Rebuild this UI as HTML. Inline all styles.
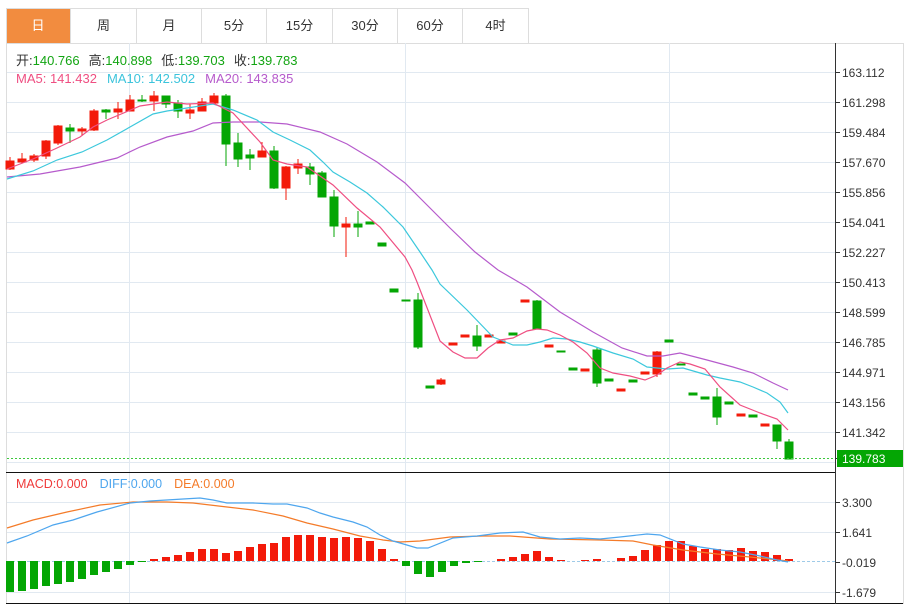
<!DOCTYPE html>
<html><head><meta charset="utf-8"><style>
html,body{margin:0;padding:0;background:#fff;width:914px;height:606px;overflow:hidden;font-family:"Liberation Sans","Noto Sans CJK SC",sans-serif;}
.tabs{position:absolute;left:6px;top:8px;height:35px;display:flex;border-top:1px solid #ddd;}
.tab{width:64.3px;height:34px;line-height:34px;text-align:center;font-size:13px;color:#333;border-right:1px solid #ddd;box-sizing:border-box;}
.tab.on{background:#f28c3f;color:#fff;}
</style></head><body>
<div class="tabs">
<div class="tab on" style="width:65px">日</div><div class="tab" style="width:66px">周</div><div class="tab" style="width:65px">月</div><div class="tab" style="width:65px">5分</div><div class="tab" style="width:66px">15分</div><div class="tab" style="width:65px">30分</div><div class="tab" style="width:65px">60分</div><div class="tab" style="width:66px">4时</div>
</div>
<svg width="914" height="606" style="position:absolute;left:0;top:0" xmlns="http://www.w3.org/2000/svg" font-family="Liberation Sans, Noto Sans CJK SC, sans-serif">
<g stroke="#e1e9f1" stroke-width="1">
<line x1="6" y1="43.5" x2="903" y2="43.5" stroke="#ddd"/>
<line x1="6.5" y1="8" x2="6.5" y2="604" stroke="#ddd"/>
<line x1="903.5" y1="43" x2="903.5" y2="604" stroke="#ddd"/>
<line x1="7" y1="72.5" x2="835" y2="72.5"/><line x1="7" y1="102.5" x2="835" y2="102.5"/><line x1="7" y1="132.5" x2="835" y2="132.5"/><line x1="7" y1="162.5" x2="835" y2="162.5"/><line x1="7" y1="192.5" x2="835" y2="192.5"/><line x1="7" y1="222.5" x2="835" y2="222.5"/><line x1="7" y1="252.5" x2="835" y2="252.5"/><line x1="7" y1="282.5" x2="835" y2="282.5"/><line x1="7" y1="312.5" x2="835" y2="312.5"/><line x1="7" y1="342.5" x2="835" y2="342.5"/><line x1="7" y1="372.5" x2="835" y2="372.5"/><line x1="7" y1="402.5" x2="835" y2="402.5"/><line x1="7" y1="432.5" x2="835" y2="432.5"/><line x1="7" y1="462.5" x2="835" y2="462.5"/>
<line x1="7" y1="502.5" x2="835" y2="502.5"/><line x1="7" y1="532.5" x2="835" y2="532.5"/><line x1="7" y1="592.5" x2="835" y2="592.5"/>
<line x1="129.5" y1="43" x2="129.5" y2="604"/><line x1="405.5" y1="43" x2="405.5" y2="604"/><line x1="669.5" y1="43" x2="669.5" y2="604"/>
</g>
<line x1="7" y1="561.5" x2="835" y2="561.5" stroke="#9fcbe8" stroke-dasharray="3,2"/>
<!-- legend -->
<text y="65" font-size="13"><tspan x="16" fill="#333">开:</tspan><tspan fill="#13a513">140.766</tspan><tspan dx="9" fill="#333">高:</tspan><tspan fill="#13a513">140.898</tspan><tspan dx="9" fill="#333">低:</tspan><tspan fill="#13a513">139.703</tspan><tspan dx="9" fill="#333">收:</tspan><tspan fill="#13a513">139.783</tspan></text>
<text y="83" font-size="13"><tspan x="16" fill="#ef4f82">MA5: 141.432</tspan><tspan dx="10" fill="#3cc4dc">MA10: 142.502</tspan><tspan dx="10" fill="#b65bcc">MA20: 143.835</tspan></text>
<!-- candles -->
<g stroke-width="1" shape-rendering="crispEdges">
<g fill="#f31a0a" stroke="#f31a0a">
<line x1="10" y1="157" x2="10" y2="170"/><rect x="6" y="161" width="8" height="8"/>
<line x1="22" y1="153" x2="22" y2="163"/><rect x="18" y="159" width="8" height="3"/>
<line x1="34" y1="154" x2="34" y2="162"/><rect x="30" y="156" width="8" height="4"/>
<line x1="46" y1="140" x2="46" y2="159"/><rect x="42" y="141" width="8" height="15"/>
<line x1="58" y1="125" x2="58" y2="145"/><rect x="54" y="126" width="8" height="17"/>
<line x1="82" y1="127" x2="82" y2="136"/><rect x="78" y="129" width="8" height="2"/>
<line x1="94" y1="109" x2="94" y2="131"/><rect x="90" y="111" width="8" height="19"/>
<line x1="118" y1="102" x2="118" y2="119"/><rect x="114" y="109" width="8" height="3"/>
<line x1="130" y1="95" x2="130" y2="111"/><rect x="126" y="100" width="8" height="11"/>
<line x1="154" y1="91" x2="154" y2="111"/><rect x="150" y="96" width="8" height="5"/>
<line x1="190" y1="104" x2="190" y2="119"/><rect x="186" y="110" width="8" height="3"/>
<line x1="202" y1="98" x2="202" y2="111"/><rect x="198" y="102" width="8" height="9"/>
<line x1="214" y1="93" x2="214" y2="103"/><rect x="210" y="96" width="8" height="7"/>
<line x1="262" y1="142" x2="262" y2="157"/><rect x="258" y="151" width="8" height="6"/>
<line x1="286" y1="166" x2="286" y2="200"/><rect x="282" y="167" width="8" height="21"/>
<line x1="298" y1="159" x2="298" y2="174"/><rect x="294" y="164" width="8" height="4"/>
<line x1="346" y1="217" x2="346" y2="257"/><rect x="342" y="224" width="8" height="3"/>
<line x1="441" y1="378" x2="441" y2="385"/><rect x="437" y="380" width="8" height="4"/>
<rect x="449" y="343" width="8" height="2"/>
<rect x="461" y="335" width="8" height="2"/>
<rect x="485" y="335" width="8" height="2"/>
<rect x="497" y="341" width="8" height="2"/>
<rect x="521" y="300" width="8" height="2"/>
<rect x="545" y="345" width="8" height="2"/>
<rect x="581" y="369" width="8" height="2"/>
<rect x="617" y="389" width="8" height="2"/>
<rect x="641" y="372" width="8" height="2"/>
<line x1="657" y1="351" x2="657" y2="377"/><rect x="653" y="352" width="8" height="22"/>
<rect x="737" y="414" width="8" height="2"/>
<rect x="761" y="424" width="8" height="2"/>
</g>
<g fill="#04a604" stroke="#04a604">
<line x1="70" y1="124" x2="70" y2="143"/><rect x="66" y="128" width="8" height="3"/>
<line x1="106" y1="109" x2="106" y2="119"/><rect x="102" y="110" width="8" height="2"/>
<line x1="142" y1="95" x2="142" y2="102"/><rect x="138" y="100" width="8" height="1"/>
<line x1="166" y1="96" x2="166" y2="108"/><rect x="162" y="96" width="8" height="8"/>
<line x1="178" y1="100" x2="178" y2="118"/><rect x="174" y="103" width="8" height="8"/>
<line x1="226" y1="94" x2="226" y2="166"/><rect x="222" y="96" width="8" height="48"/>
<line x1="238" y1="133" x2="238" y2="167"/><rect x="234" y="143" width="8" height="16"/>
<line x1="250" y1="149" x2="250" y2="170"/><rect x="246" y="155" width="8" height="3"/>
<line x1="274" y1="146" x2="274" y2="189"/><rect x="270" y="151" width="8" height="37"/>
<line x1="310" y1="163" x2="310" y2="185"/><rect x="306" y="167" width="8" height="7"/>
<line x1="322" y1="171" x2="322" y2="197"/><rect x="318" y="173" width="8" height="24"/>
<line x1="334" y1="190" x2="334" y2="237"/><rect x="330" y="197" width="8" height="29"/>
<line x1="358" y1="211" x2="358" y2="237"/><rect x="354" y="224" width="8" height="3"/>
<rect x="366" y="222" width="8" height="2"/>
<rect x="378" y="243" width="8" height="3"/>
<rect x="390" y="289" width="8" height="3"/>
<rect x="402" y="300" width="8" height="1"/>
<line x1="418" y1="293" x2="418" y2="349"/><rect x="414" y="300" width="8" height="47"/>
<rect x="426" y="386" width="8" height="2"/>
<line x1="477" y1="325" x2="477" y2="351"/><rect x="473" y="336" width="8" height="10"/>
<rect x="509" y="333" width="8" height="2"/>
<line x1="537" y1="300" x2="537" y2="329"/><rect x="533" y="301" width="8" height="28"/>
<rect x="557" y="351" width="8" height="1"/>
<rect x="569" y="368" width="8" height="2"/>
<line x1="597" y1="347" x2="597" y2="387"/><rect x="593" y="350" width="8" height="33"/>
<rect x="605" y="379" width="8" height="2"/>
<rect x="629" y="380" width="8" height="2"/>
<rect x="665" y="340" width="8" height="2"/>
<rect x="677" y="364" width="8" height="1"/>
<rect x="689" y="393" width="8" height="2"/>
<rect x="701" y="397" width="8" height="2"/>
<line x1="717" y1="388" x2="717" y2="425"/><rect x="713" y="397" width="8" height="20"/>
<rect x="725" y="402" width="8" height="2"/>
<rect x="749" y="415" width="8" height="2"/>
<line x1="777" y1="425" x2="777" y2="449"/><rect x="773" y="425" width="8" height="16"/>
<line x1="789" y1="439" x2="789" y2="459"/><rect x="785" y="442" width="8" height="17"/>
</g>
</g>
<!-- MAs -->
<g fill="none" stroke-width="1.2">
<polyline stroke="#b65bcc" points="7,177 40,174 80,167 117,158 140,147 167,137 193,131 213,123 233,122 260,122 287,124 320,132 347,144 377,162 405,183 420,198 450,228 475,252 498,270 527,287 560,312 593,332 622,348 647,356 663,356 680,353 707,360 733,367 753,373 773,383 788,390"/>
<polyline stroke="#3cc8dc" points="7,179 33,171 57,160 82,152 107,140 130,127 153,114 167,111 187,108 213,104 233,110 257,120 273,132 290,140 310,150 323,162 333,172 350,182 367,193 383,207 403,227 420,252 432,270 440,284 467,310 493,337 513,345 527,345 540,342 553,338 567,339 580,342 593,346 613,353 633,359 647,367 667,369 683,368 707,375 720,378 740,382 753,387 767,393 780,402 788,413"/>
<polyline stroke="#ef4f82" points="7,169 33,159 57,148 80,137 93,127 107,120 140,106 167,102 187,104 213,103 233,113 260,142 273,160 287,164 307,167 333,185 357,208 380,227 405,257 412,270 417,282 440,341 453,352 465,358 477,358 488,348 500,340 513,338 527,331 537,329 547,330 560,335 573,342 587,353 600,368 613,373 630,376 645,380 657,375 667,368 680,362 690,364 705,369 720,387 740,405 760,413 777,419 788,430"/>
</g>
<line x1="7" y1="458.5" x2="835" y2="458.5" stroke="#3cc83c" stroke-dasharray="2,2"/>
<!-- MACD bars -->
<g shape-rendering="crispEdges">
<g fill="#04a604">
<rect x="6" y="561" width="8" height="31"/><rect x="18" y="561" width="8" height="30"/><rect x="30" y="561" width="8" height="28"/><rect x="42" y="561" width="8" height="25"/><rect x="54" y="561" width="8" height="23"/><rect x="66" y="561" width="8" height="21"/><rect x="78" y="561" width="8" height="18"/><rect x="90" y="561" width="8" height="14"/><rect x="102" y="561" width="8" height="11"/><rect x="114" y="561" width="8" height="8"/><rect x="126" y="561" width="8" height="4"/><rect x="138" y="561" width="8" height="1"/>
<rect x="402" y="561" width="8" height="5"/><rect x="414" y="561" width="8" height="13"/><rect x="426" y="561" width="8" height="16"/><rect x="438" y="561" width="8" height="11"/><rect x="450" y="561" width="8" height="5"/><rect x="462" y="561" width="8" height="2"/><rect x="474" y="561" width="8" height="1"/>
</g>
<g fill="#f31a0a">
<rect x="150" y="559" width="8" height="2"/><rect x="162" y="557" width="8" height="4"/><rect x="174" y="555" width="8" height="6"/><rect x="186" y="552" width="8" height="9"/><rect x="198" y="549" width="8" height="12"/><rect x="210" y="549" width="8" height="12"/><rect x="222" y="553" width="8" height="8"/><rect x="234" y="551" width="8" height="10"/><rect x="246" y="547" width="8" height="14"/><rect x="258" y="544" width="8" height="17"/><rect x="270" y="543" width="8" height="18"/><rect x="282" y="537" width="8" height="24"/><rect x="294" y="535" width="8" height="26"/><rect x="306" y="535" width="8" height="26"/><rect x="318" y="537" width="8" height="24"/><rect x="330" y="538" width="8" height="23"/><rect x="342" y="537" width="8" height="24"/><rect x="354" y="538" width="8" height="23"/><rect x="366" y="541" width="8" height="20"/><rect x="378" y="549" width="8" height="12"/><rect x="390" y="559" width="8" height="2"/>
<rect x="497" y="559" width="8" height="2"/><rect x="509" y="557" width="8" height="4"/><rect x="521" y="554" width="8" height="7"/><rect x="533" y="551" width="8" height="10"/><rect x="545" y="557" width="8" height="4"/><rect x="557" y="560" width="8" height="1"/><rect x="581" y="560" width="8" height="1"/><rect x="593" y="559" width="8" height="2"/><rect x="617" y="558" width="8" height="3"/><rect x="629" y="556" width="8" height="5"/><rect x="641" y="550" width="8" height="11"/><rect x="653" y="545" width="8" height="16"/><rect x="665" y="541" width="8" height="20"/><rect x="677" y="541" width="8" height="20"/><rect x="689" y="546" width="8" height="15"/><rect x="701" y="549" width="8" height="12"/><rect x="713" y="549" width="8" height="12"/><rect x="725" y="550" width="8" height="11"/><rect x="737" y="548" width="8" height="13"/><rect x="749" y="551" width="8" height="10"/><rect x="761" y="552" width="8" height="9"/><rect x="773" y="555" width="8" height="6"/><rect x="785" y="559" width="8" height="2"/>
</g>
</g>
<g fill="none" stroke-width="1.2">
<polyline stroke="#f47b29" points="7,528 33,520 67,512 100,505 133,502 167,502 193,503 227,507 253,510 283,516 307,523 333,529 360,536 383,540 400,542 420,541 450,537 483,536 510,536 550,539 600,540 633,541 653,545 683,550 717,554 750,557 788,561"/>
<polyline stroke="#4ea6ee" points="7,543 27,536 53,525 73,520 97,512 130,503 150,501 183,499 200,498 213,500 227,503 253,503 273,504 287,504 307,508 320,513 333,517 353,522 367,527 380,535 393,541 400,543 417,548 428,548 453,538 477,536 500,533 523,532 540,537 560,539 580,538 600,539 620,537 647,534 660,535 683,544 700,547 720,550 740,552 760,556 777,560 788,562"/>
</g>
<text y="488" font-size="12.5"><tspan x="16" fill="#ef3a3a">MACD:0.000</tspan><tspan dx="12" fill="#4ea6ee">DIFF:0.000</tspan><tspan dx="12" fill="#f47b29">DEA:0.000</tspan></text>
<!-- axes -->
<line x1="6" y1="472.5" x2="835" y2="472.5" stroke="#111"/>
<line x1="6" y1="603.5" x2="903" y2="603.5" stroke="#111"/>
<line x1="835.5" y1="43" x2="835.5" y2="604" stroke="#333"/>
<g stroke="#333"><line x1="835" y1="72.5" x2="840" y2="72.5"/><line x1="835" y1="102.5" x2="840" y2="102.5"/><line x1="835" y1="132.5" x2="840" y2="132.5"/><line x1="835" y1="162.5" x2="840" y2="162.5"/><line x1="835" y1="192.5" x2="840" y2="192.5"/><line x1="835" y1="222.5" x2="840" y2="222.5"/><line x1="835" y1="252.5" x2="840" y2="252.5"/><line x1="835" y1="282.5" x2="840" y2="282.5"/><line x1="835" y1="312.5" x2="840" y2="312.5"/><line x1="835" y1="342.5" x2="840" y2="342.5"/><line x1="835" y1="372.5" x2="840" y2="372.5"/><line x1="835" y1="402.5" x2="840" y2="402.5"/><line x1="835" y1="432.5" x2="840" y2="432.5"/><line x1="835" y1="458.5" x2="840" y2="458.5"/><line x1="835" y1="502.5" x2="840" y2="502.5"/><line x1="835" y1="532.5" x2="840" y2="532.5"/><line x1="835" y1="562.5" x2="840" y2="562.5"/><line x1="835" y1="592.5" x2="840" y2="592.5"/></g>
<g font-size="12" fill="#333">
<text x="842" y="77">163.112</text><text x="842" y="107">161.298</text><text x="842" y="137">159.484</text><text x="842" y="167">157.670</text><text x="842" y="197">155.856</text><text x="842" y="227">154.041</text><text x="842" y="257">152.227</text><text x="842" y="287">150.413</text><text x="842" y="317">148.599</text><text x="842" y="347">146.785</text><text x="842" y="377">144.971</text><text x="842" y="407">143.156</text><text x="842" y="437">141.342</text>
<text x="842" y="507">3.300</text><text x="842" y="537">1.641</text><text x="842" y="567">-0.019</text><text x="842" y="597">-1.679</text>
</g>
<rect x="837" y="450" width="66" height="17" fill="#04a604"/>
<text x="842" y="463" font-size="12" fill="#fff">139.783</text>
</svg>
</body></html>
